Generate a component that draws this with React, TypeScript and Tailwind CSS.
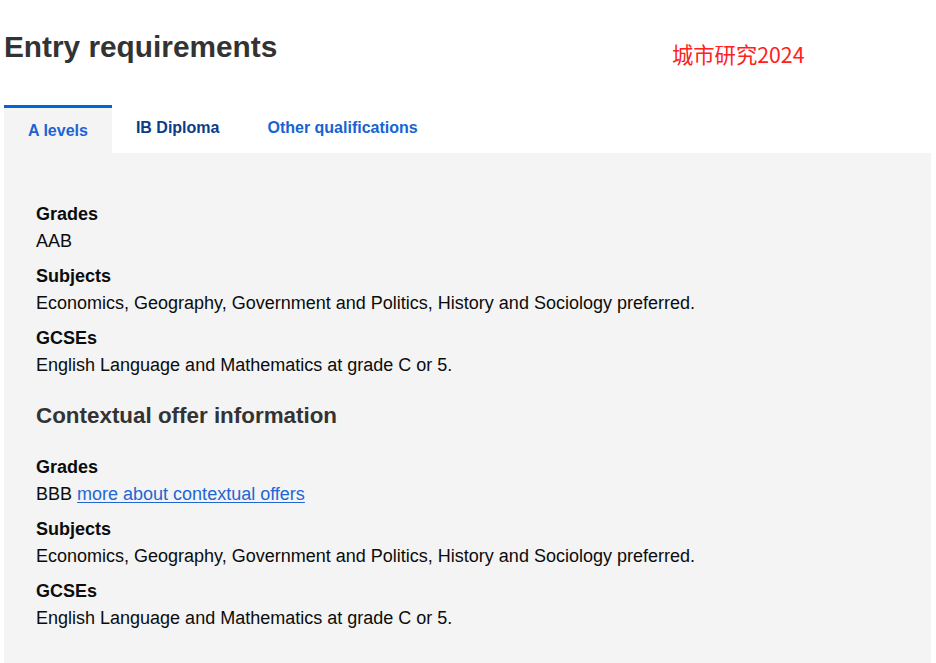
import { useState } from "react";

type Qualification = {
  label: string;
  value: string;
  link?: string;
};

const standardOffer: Qualification[] = [
  { label: "Grades", value: "AAB" },
  {
    label: "Subjects",
    value: "Economics, Geography, Government and Politics, History and Sociology preferred."
  },
  { label: "GCSEs", value: "English Language and Mathematics at grade C or 5." }
];

const contextualOffer: Qualification[] = [
  { label: "Grades", value: "BBB", link: "more about contextual offers" },
  {
    label: "Subjects",
    value: "Economics, Geography, Government and Politics, History and Sociology preferred."
  },
  { label: "GCSEs", value: "English Language and Mathematics at grade C or 5." }
];

const tabs = [
  { id: "a-levels", label: "A levels", tone: "text-[#1c63d5]" },
  { id: "ib", label: "IB Diploma", tone: "text-[#0a3c8a]" },
  { id: "other", label: "Other qualifications", tone: "text-[#1763d2]" }
];

function OfferList({ items }: { items: Qualification[] }) {
  return (
    <dl className="space-y-[8px]">
      {items.map((item) => (
        <div key={item.label}>
          <dt className="text-[18px] font-bold leading-[27px] text-[#0b0c0c]">{item.label}</dt>
          <dd className="text-[18px] leading-[27px] text-[#0b0c0c]">
            {item.value}
            {item.link && (
              <>
                {" "}
                <a href="#" className="text-[#2266d4] underline underline-offset-[2px]">
                  {item.link}
                </a>
              </>
            )}
          </dd>
        </div>
      ))}
    </dl>
  );
}

export default function App() {
  const [active, setActive] = useState("a-levels");

  return (
    <div className="relative min-h-[663px] bg-white font-['Liberation_Sans',Arial,sans-serif]">
      <span className="absolute left-[672px] top-[40px] font-['Noto_Sans_CJK_SC','Liberation_Sans',sans-serif] text-[21.3px] leading-[28px] text-[#ff2020]">
        城市研究2024
      </span>

      <section className="ml-[4px] w-[927px] pt-[29px]">
        <h2 className="text-[29.8px] font-bold leading-[36px] text-[#333333]">Entry requirements</h2>

        <div role="tablist" className="mt-[40px] flex items-start">
          {tabs.map((tab) => {
            const selected = active === tab.id;
            return (
              <button
                key={tab.id}
                type="button"
                role="tab"
                aria-selected={selected}
                onClick={() => setActive(tab.id)}
                className={`flex h-[48px] items-start px-6 pt-[13px] text-[16px] font-bold leading-[20px] ${
                  selected
                    ? "border-t-[3px] border-[#0066d6] bg-[#f4f4f4] text-[#1c63d5]"
                    : tab.tone
                }`}
              >
                {tab.label}
              </button>
            );
          })}
        </div>

        <div className="bg-[#f4f4f4] px-[32px] pb-[48px] pt-[48px]">
          <OfferList items={standardOffer} />

          <h3 className="mb-[23px] mt-[22px] text-[22.4px] font-bold leading-[30px] text-[#333333]">
            Contextual offer information
          </h3>

          <OfferList items={contextualOffer} />
        </div>
      </section>
    </div>
  );
}
